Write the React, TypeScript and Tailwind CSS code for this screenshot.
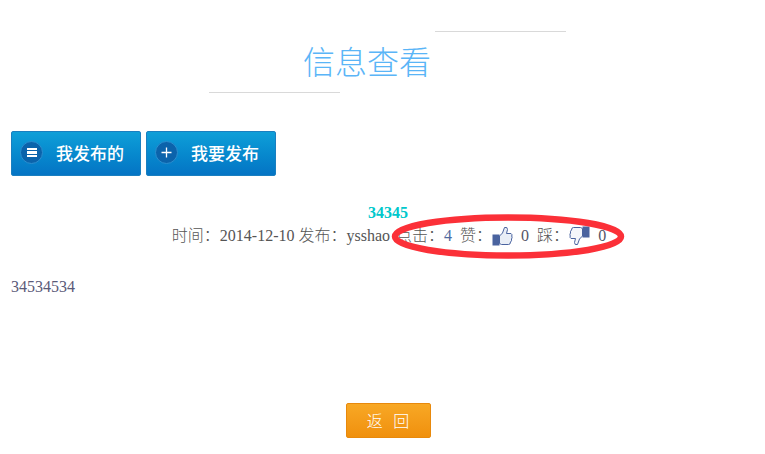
import React from 'react';

const cjk = { fontFamily: '"Liberation Serif", "Noto Sans CJK SC", serif' };

const ThumbUp: React.FC = () => (
  <svg width="21" height="20" viewBox="0 0 21 20" className="inline-block">
    <rect x="0.5" y="8.5" width="7" height="11" fill="#4a639f" />
    <path
      d="M7.5 10 L10.5 7 L12.5 1.5 Q15.5 0.5 15.5 3.5 L14.5 7.5 L19 7.5 Q20.5 8.5 19.8 10 Q20.5 12 19.5 13 Q20 15 18.5 16 Q18.5 18.5 16.5 18.5 L9.5 18.5 L7.5 17.5 Z"
      fill="#e9eef6"
      stroke="#4a639f"
      strokeWidth="1"
    />
  </svg>
);

const ThumbDown: React.FC = () => (
  <svg width="21" height="20" viewBox="0 0 21 20" className="inline-block">
    <rect x="13.5" y="0.5" width="7" height="11" fill="#4a639f" />
    <path
      d="M13.5 10 L10.5 13 L8.5 18.5 Q5.5 19.5 5.5 16.5 L6.5 12.5 L2 12.5 Q0.5 11.5 1.2 10 Q0.5 8 1.5 7 Q1 5 2.5 4 Q2.5 1.5 4.5 1.5 L11.5 1.5 L13.5 2.5 Z"
      fill="#f4f6fa"
      stroke="#4a639f"
      strokeWidth="1"
    />
  </svg>
);

const BlueButton: React.FC<{ label: string; icon: React.ReactNode }> = ({ label, icon }) => (
  <button className="flex h-[45px] w-[130px] items-center rounded-[2px] border border-[#1a7fc0] bg-gradient-to-b from-[#0f9fd8] to-[#0574c4] pb-[2px] pl-[8px] text-[17px] font-medium text-white">
    <span className="flex h-[23px] w-[23px] items-center justify-center rounded-full border border-[#2b8fd0] bg-[#0b63ab]">
      {icon}
    </span>
    <span className="ml-[13px]">{label}</span>
  </button>
);

export default function App() {
  return (
    <div className="relative h-[454px] w-[765px] overflow-hidden bg-white pl-[11px]" style={cjk}>
      {/* Heading */}
      <div className="h-[131px] pt-[31px]">
        <div className="ml-[424px] h-px w-[131px] bg-[#d9d9d9]" />
        <h1
          className="mt-[6px] h-[44px] pl-[292px] text-[32px] leading-[44px] font-light text-[#5ab5f7]"
          style={{ fontFamily: '"Noto Sans CJK SC", sans-serif' }}
        >
          信息查看
        </h1>
        <div className="ml-[198px] mt-[10px] h-px w-[131px] bg-[#d9d9d9]" />
      </div>

      {/* Buttons */}
      <div className="flex gap-[5px]" style={{ fontFamily: '"Noto Sans CJK SC", sans-serif' }}>
        <BlueButton
          label="我发布的"
          icon={
            <span className="flex flex-col gap-[1px]">
              <span className="h-[2.5px] w-[10px] bg-white" />
              <span className="h-[2.5px] w-[10px] bg-white" />
              <span className="h-[2.5px] w-[10px] bg-white" />
            </span>
          }
        />
        <BlueButton
          label="我要发布"
          icon={
            <svg width="11" height="11" viewBox="0 0 11 11">
              <path d="M5.5 0.5V10.5M0.5 5.5H10.5" stroke="#fff" strokeWidth="1.3" />
            </svg>
          }
        />
      </div>

      {/* Article */}
      <div className="mt-[28px] text-center text-[16px] leading-[18px] font-bold text-[#00c8cc]">34345</div>
      <div className="mt-[4px] flex h-[20px] items-center justify-center whitespace-pre pl-[2px] text-[16px] font-light text-[#555555]">
        <span>时间：2014-12-10 发布：ysshao </span>
        <span className="ml-[2px]">点击：</span>
        <span className="text-[#4f6aa0]">4</span>
        <span>  赞：</span>
        <ThumbUp />
        <span className="text-[#555566]">  0  </span>
        <span>踩：</span>
        <ThumbDown />
        <span className="text-[#555566]">  0</span>
      </div>
      <p className="mt-[31px] text-[16px] leading-[20px] text-[#5a5a78]">34534534</p>

      {/* Back */}
      <div className="mt-[106px] flex justify-center">
        <button
          className="h-[35px] w-[85px] rounded-[2px] border border-[#e8890c] bg-gradient-to-b from-[#f8a824] to-[#f0900c] pb-[2px] text-[16px] font-light text-white"
          style={{ fontFamily: '"Noto Sans CJK SC", sans-serif' }}
        >
          返&nbsp;&nbsp;&nbsp;回
        </button>
      </div>

      {/* Hand-drawn annotation */}
      <svg width="240" height="50" viewBox="0 0 240 50" className="absolute left-[389px] top-[212px]">
        <ellipse cx="119" cy="24.5" rx="113" ry="19" fill="none" stroke="#fb3038" strokeWidth="6.5" />
      </svg>
    </div>
  );
}
